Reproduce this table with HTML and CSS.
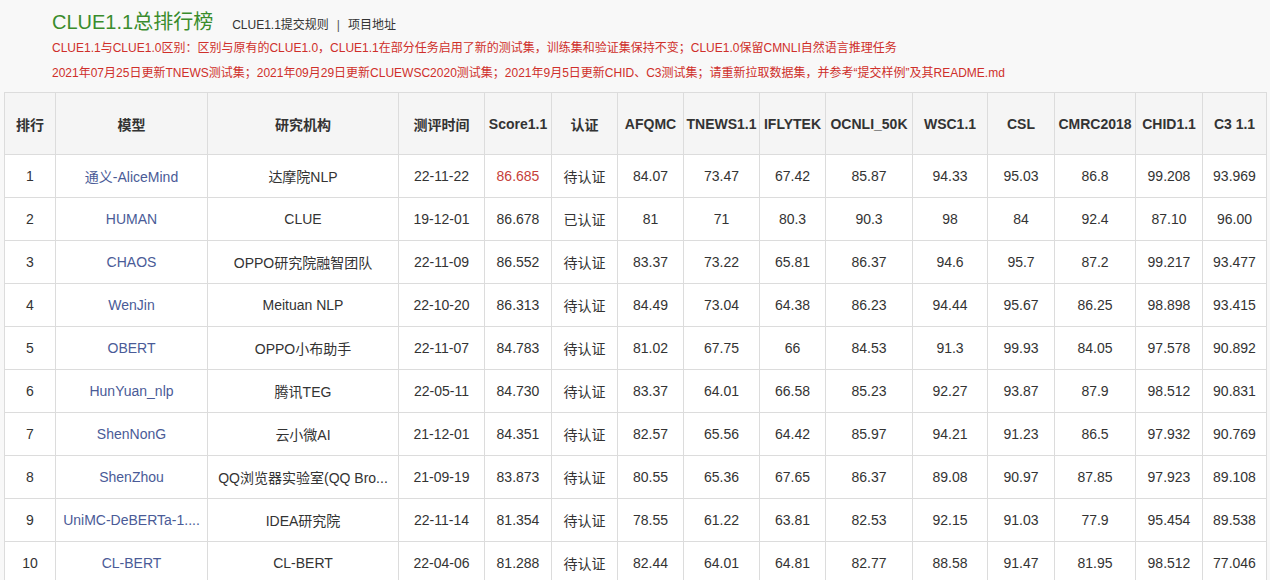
FILE: index.html
```html
<!DOCTYPE html>
<html lang="zh-CN">
<head>
<meta charset="utf-8">
<title>CLUE1.1总排行榜</title>
<link rel="stylesheet" href="styles.css">
</head>
<body>
<div class="page">
  <header class="intro">
    <div class="title-row">
      <h1 class="title">CLUE1.1总排行榜</h1>
      <nav class="links"><a class="link">CLUE1.1提交规则</a><span class="sep">|</span><a class="link">项目地址</a></nav>
    </div>
    <p class="notice">CLUE1.1与CLUE1.0区别：区别与原有的CLUE1.0，CLUE1.1在部分任务启用了新的测试集，训练集和验证集保持不变；CLUE1.0保留CMNLI自然语言推理任务</p>
    <p class="notice">2021年07月25日更新TNEWS测试集；2021年09月29日更新CLUEWSC2020测试集；2021年9月5日更新CHID、C3测试集；请重新拉取数据集，并参考“提交样例”及其README.md</p>
  </header>
  <table class="board">
    <colgroup>
      <col class="c-rank"><col class="c-model"><col class="c-org"><col class="c-date"><col class="c-score"><col class="c-auth">
      <col class="c-afqmc"><col class="c-tnews"><col class="c-iflytek"><col class="c-ocnli"><col class="c-wsc"><col class="c-csl">
      <col class="c-cmrc"><col class="c-chid"><col class="c-c3">
    </colgroup>
    <thead>
      <tr><th>排行</th><th>模型</th><th>研究机构</th><th>测评时间</th><th>Score1.1</th><th>认证</th><th>AFQMC</th><th>TNEWS1.1</th><th>IFLYTEK</th><th>OCNLI_50K</th><th>WSC1.1</th><th>CSL</th><th>CMRC2018</th><th>CHID1.1</th><th>C3 1.1</th></tr>
    </thead>
    <tbody>
      <tr><td>1</td><td class="model">通义-AliceMind</td><td>达摩院NLP</td><td>22-11-22</td><td class="top">86.685</td><td>待认证</td><td>84.07</td><td>73.47</td><td>67.42</td><td>85.87</td><td>94.33</td><td>95.03</td><td>86.8</td><td>99.208</td><td>93.969</td></tr>
      <tr><td>2</td><td class="model">HUMAN</td><td>CLUE</td><td>19-12-01</td><td>86.678</td><td>已认证</td><td>81</td><td>71</td><td>80.3</td><td>90.3</td><td>98</td><td>84</td><td>92.4</td><td>87.10</td><td>96.00</td></tr>
      <tr><td>3</td><td class="model">CHAOS</td><td>OPPO研究院融智团队</td><td>22-11-09</td><td>86.552</td><td>待认证</td><td>83.37</td><td>73.22</td><td>65.81</td><td>86.37</td><td>94.6</td><td>95.7</td><td>87.2</td><td>99.217</td><td>93.477</td></tr>
      <tr><td>4</td><td class="model">WenJin</td><td>Meituan NLP</td><td>22-10-20</td><td>86.313</td><td>待认证</td><td>84.49</td><td>73.04</td><td>64.38</td><td>86.23</td><td>94.44</td><td>95.67</td><td>86.25</td><td>98.898</td><td>93.415</td></tr>
      <tr><td>5</td><td class="model">OBERT</td><td>OPPO小布助手</td><td>22-11-07</td><td>84.783</td><td>待认证</td><td>81.02</td><td>67.75</td><td>66</td><td>84.53</td><td>91.3</td><td>99.93</td><td>84.05</td><td>97.578</td><td>90.892</td></tr>
      <tr><td>6</td><td class="model">HunYuan_nlp</td><td>腾讯TEG</td><td>22-05-11</td><td>84.730</td><td>待认证</td><td>83.37</td><td>64.01</td><td>66.58</td><td>85.23</td><td>92.27</td><td>93.87</td><td>87.9</td><td>98.512</td><td>90.831</td></tr>
      <tr><td>7</td><td class="model">ShenNonG</td><td>云小微AI</td><td>21-12-01</td><td>84.351</td><td>待认证</td><td>82.57</td><td>65.56</td><td>64.42</td><td>85.97</td><td>94.21</td><td>91.23</td><td>86.5</td><td>97.932</td><td>90.769</td></tr>
      <tr><td>8</td><td class="model">ShenZhou</td><td>QQ浏览器实验室(QQ Bro...</td><td>21-09-19</td><td>83.873</td><td>待认证</td><td>80.55</td><td>65.36</td><td>67.65</td><td>86.37</td><td>89.08</td><td>90.97</td><td>87.85</td><td>97.923</td><td>89.108</td></tr>
      <tr><td>9</td><td class="model">UniMC-DeBERTa-1....</td><td>IDEA研究院</td><td>22-11-14</td><td>81.354</td><td>待认证</td><td>78.55</td><td>61.22</td><td>63.81</td><td>82.53</td><td>92.15</td><td>91.03</td><td>77.9</td><td>95.454</td><td>89.538</td></tr>
      <tr><td>10</td><td class="model">CL-BERT</td><td>CL-BERT</td><td>22-04-06</td><td>81.288</td><td>待认证</td><td>82.44</td><td>64.01</td><td>64.81</td><td>82.77</td><td>88.58</td><td>91.47</td><td>81.95</td><td>98.512</td><td>77.046</td></tr>
    </tbody>
  </table>
</div>
</body>
</html>
```

FILE: styles.css
```css
html, body {
  margin: 0;
  padding: 0;
  background: #f8f8f8;
}
body {
  font-family: "Liberation Sans", "Noto Sans CJK SC", sans-serif;
  color: #333;
}
.page {
  padding: 8px 4px 0 4px;
}
.intro {
  padding-left: 48px;
}
.title-row {
  display: flex;
  align-items: baseline;
  height: 28px;
}
.title {
  margin: 0;
  font-size: 20px;
  font-weight: normal;
  line-height: 28px;
  color: #3a8c2c;
}
.links {
  margin-left: 19px;
  font-size: 12px;
  color: #333;
}
.link {
  color: #333;
  text-decoration: none;
}
.sep {
  margin: 0 8px;
  color: #555;
}
.notice {
  margin: 0;
  font-size: 12px;
  line-height: 25px;
  color: #cf2f2a;
  white-space: nowrap;
}
.board {
  margin-top: 6px;
  width: 1262px;
  table-layout: fixed;
  border-collapse: collapse;
  background: #fff;
  font-size: 14px;
}
.board th, .board td {
  border: 1px solid #dcdcdc;
  text-align: center;
  white-space: nowrap;
  overflow: hidden;
  padding: 0 2px;
}
.board th {
  height: 61px;
  background: #f5f5f5;
  font-weight: bold;
  color: #333;
}
.board td {
  height: 42px;
  color: #333;
}
.board td.model {
  color: #4a5b97;
}
.board td.top {
  color: #c6403a;
}
.c-rank { width: 51px; }
.c-model { width: 152px; }
.c-org { width: 191px; }
.c-date { width: 86px; }
.c-score { width: 67px; }
.c-auth { width: 66px; }
.c-afqmc { width: 66px; }
.c-tnews { width: 76px; }
.c-iflytek { width: 66px; }
.c-ocnli { width: 87px; }
.c-wsc { width: 75px; }
.c-csl { width: 67px; }
.c-cmrc { width: 81px; }
.c-chid { width: 67px; }
.c-c3 { width: 64px; }
```
